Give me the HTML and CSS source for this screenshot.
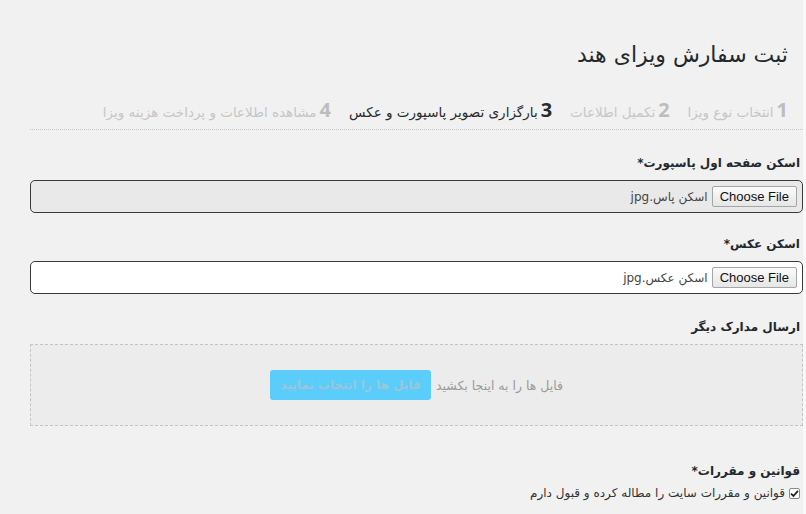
FILE: index.html
```html
<!DOCTYPE html>
<html lang="fa" dir="rtl">
<head>
<meta charset="utf-8">
<title>ثبت سفارش ویزای هند</title>
<link rel="stylesheet" href="styles.css">
</head>
<body>
<div class="page">
  <h1 class="title">ثبت سفارش ویزای هند</h1>
  <div class="steps">
    <div class="step"><span class="num">1</span><span class="txt">انتخاب نوع ویزا</span></div>
    <div class="step"><span class="num">2</span><span class="txt">تکمیل اطلاعات</span></div>
    <div class="step active"><span class="num">3</span><span class="txt">بارگزاری تصویر پاسپورت و عکس</span></div>
    <div class="step"><span class="num">4</span><span class="txt">مشاهده اطلاعات و پرداخت هزینه ویزا</span></div>
  </div>

  <div class="field f1">
    <div class="label">اسکن صفحه اول پاسپورت*</div>
    <div class="file grey"><button class="choose" type="button" dir="ltr">Choose File</button><span class="fname">اسکن پاس.jpg</span></div>
  </div>

  <div class="field f2">
    <div class="label">اسکن عکس*</div>
    <div class="file"><button class="choose" type="button" dir="ltr">Choose File</button><span class="fname">اسکن عکس.jpg</span></div>
  </div>

  <div class="field f3">
    <div class="label">ارسال مدارک دیگر</div>
    <div class="drop">
      <span class="drop-text">فایل ها را به اینجا بکشید</span>
      <span class="drop-btn">فایل ها را انتخاب نمایید</span>
    </div>
  </div>

  <div class="field f4">
    <div class="label">قوانین و مقررات*</div>
    <div class="check-row">
      <span class="box"><svg width="9" height="9" viewBox="0 0 9 9"><path d="M1 4.6 L3.4 7 L8 1.8" fill="none" stroke="#222" stroke-width="1.8"/></svg></span>
      <span class="check-text">قوانین و مقررات سایت را مطاله کرده و قبول دارم</span>
    </div>
  </div>
</div>
</body>
</html>
```

FILE: styles.css
```css
html {
  background: #f8f8f8;
}
body {
  margin: 0;
  direction: rtl;
  font-family: "DejaVu Sans", sans-serif;
  color: #23282d;
}
.page {
  background: #f1f1f1;
  margin-right: 3px;
  min-height: 514px;
  padding: 0 0 0 30px;
  box-sizing: border-box;
  overflow: hidden;
}
.title {
  margin: 0;
  padding: 40px 15px 0 0;
  font-size: 22px;
  line-height: 29px;
  font-weight: normal;
  color: #23282d;
}
.steps {
  display: flex;
  align-items: baseline;
  gap: 18px;
  margin-top: 27px;
  padding: 0 15px 5px 0;
  height: 28px;
  border-bottom: 1px dotted #c8c8c8;
}
.step {
  display: flex;
  align-items: baseline;
  gap: 3px;
  color: #c6c6c6;
}
.step .num {
  font-family: "Open Sans", sans-serif;
  font-weight: bold;
  font-size: 20px;
  line-height: 28px;
  color: #bdbdbd;
}
.step .txt {
  font-size: 13.5px;
}
.step.active,
.step.active .num {
  color: #2a2a2a;
}
.field .label {
  font-weight: bold;
  font-size: 12px;
  line-height: 20px;
  padding-right: 3px;
  margin-bottom: 7px;
  color: #23282d;
}
.f1 { margin-top: 23px; }
.f2 { margin-top: 21px; }
.f3 { margin-top: 23px; }
.f4 { margin-top: 35px; }
.f4 .label { margin-bottom: 2px; }
.file {
  height: 33px;
  box-sizing: border-box;
  border: 1px solid #3a3a3a;
  border-radius: 5px;
  background: #fff;
  display: flex;
  align-items: center;
  gap: 4px;
  padding-right: 5px;
}
.file.grey {
  background: #e9e9e9;
}
.choose {
  font-family: "Liberation Sans", Arial, sans-serif;
  font-size: 13px;
  height: 21px;
  padding: 0 7px;
  border: 1px solid #a6a6a6;
  border-radius: 2px;
  background: linear-gradient(#fbfbfb, #e6e6e6);
  color: #111;
}
.fname {
  font-size: 12px;
  color: #444;
}
.drop {
  height: 82px;
  box-sizing: border-box;
  border: 1px dashed #c4c4c4;
  background: #ececec;
  display: flex;
  align-items: center;
  justify-content: center;
  gap: 5px;
}
.drop-text {
  font-size: 12.5px;
  color: #9a9a9a;
}
.drop-btn {
  width: 161px;
  height: 30px;
  box-sizing: border-box;
  display: flex;
  align-items: center;
  justify-content: center;
  background: #5bcdfb;
  border-radius: 3px;
  font-size: 12px;
  font-weight: bold;
  color: #9cc6d8;
}
.check-row {
  display: flex;
  align-items: center;
  gap: 4px;
  padding-right: 3px;
  height: 20px;
}
.box {
  width: 11px;
  height: 11px;
  box-sizing: border-box;
  border: 1px solid #8a8a8a;
  border-radius: 2px;
  background: #fff;
  display: flex;
  align-items: center;
  justify-content: center;
}
.check-text {
  font-size: 12px;
  color: #333;
}
```
